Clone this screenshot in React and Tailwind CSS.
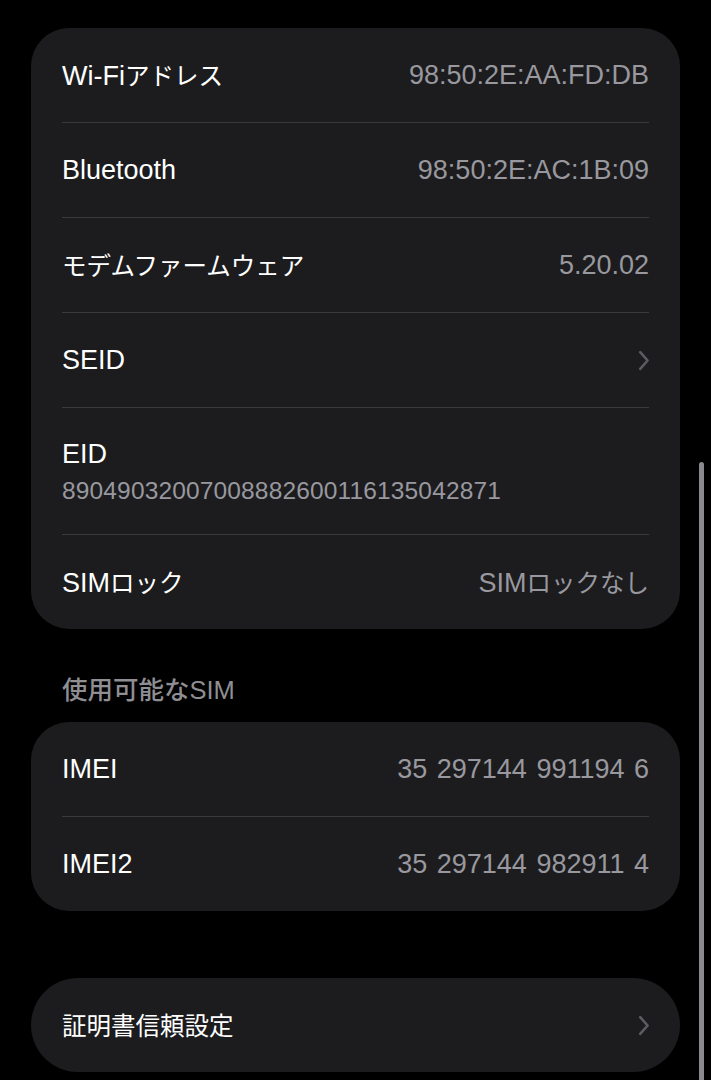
import React from "react";

function J({ children }) {
  return (
    <span className="text-[24.5px] [font-family:'Noto_Sans_CJK_JP',sans-serif]">
      {children}
    </span>
  );
}

function Chevron() {
  return (
    <svg width="12" height="21" viewBox="0 0 12 21" fill="none">
      <path
        d="M2.2 2.2 L9.6 10.5 L2.2 18.8"
        stroke="#5b5b60"
        strokeWidth="2.6"
        strokeLinecap="round"
        strokeLinejoin="round"
      />
    </svg>
  );
}

function Sep() {
  return <div className="mx-[31px] h-px bg-[#3a3a3c]" />;
}

function Row({ label, value, chevron, imei }) {
  return (
    <div className="flex h-[94px] items-center justify-between px-[31px]">
      <div className="text-[27px] leading-[32px] text-white">{label}</div>
      {value && (
        <div
          className={
            "text-[27px] leading-[32px] text-[#98989e]" +
            (imei ? " [word-spacing:2px]" : "")
          }
        >
          {value}
        </div>
      )}
      {chevron && (
        <div className="-mr-[1px]">
          <Chevron />
        </div>
      )}
    </div>
  );
}

export default function App() {
  return (
    <div className="relative min-h-[1080px] overflow-hidden bg-black [font-family:'Liberation_Sans','Noto_Sans_CJK_JP',sans-serif]">
      <div className="px-[31px] pt-[28px]">
        <div className="rounded-[38px] bg-[#1c1c1e]">
          <Row
            label={
              <>
                Wi-Fi<J>アドレス</J>
              </>
            }
            value="98:50:2E:AA:FD:DB"
          />
          <Sep />
          <Row label="Bluetooth" value="98:50:2E:AC:1B:09" />
          <Sep />
          <Row label={<J>モデムファームウェア</J>} value="5.20.02" />
          <Sep />
          <Row label="SEID" chevron />
          <Sep />
          <div className="flex h-[126px] flex-col justify-center px-[31px] pt-[2px]">
            <div className="text-[27px] leading-[32px] text-white">EID</div>
            <div className="mt-[6px] text-[24.5px] leading-[30px] tracking-[0.15px] text-[#98989e]">
              89049032007008882600116135042871
            </div>
          </div>
          <Sep />
          <Row
            label={
              <>
                SIM<J>ロック</J>
              </>
            }
            value={
              <>
                SIM<J>ロックなし</J>
              </>
            }
          />
        </div>

        <div className="flex h-[93px] items-end pb-[13px] pl-[31px] text-[#8e8e93]">
          <div className="leading-[30px]">
            <span className="text-[25.5px] font-medium [font-family:'Noto_Sans_CJK_JP',sans-serif]">
              使用可能な
            </span>
            <span className="text-[25.5px]">SIM</span>
          </div>
        </div>

        <div className="rounded-[38px] bg-[#1c1c1e]">
          <Row label="IMEI" value="35 297144 991194 6" imei />
          <Sep />
          <Row label="IMEI2" value="35 297144 982911 4" imei />
        </div>

        <div className="h-[67px]" />

        <div className="rounded-[47px] bg-[#1c1c1e]">
          <Row label={<J>証明書信頼設定</J>} chevron />
        </div>
      </div>

      <div className="absolute left-[699px] top-[462px] h-[640px] w-[5px] rounded-full bg-[#8a8a8e]" />
    </div>
  );
}
